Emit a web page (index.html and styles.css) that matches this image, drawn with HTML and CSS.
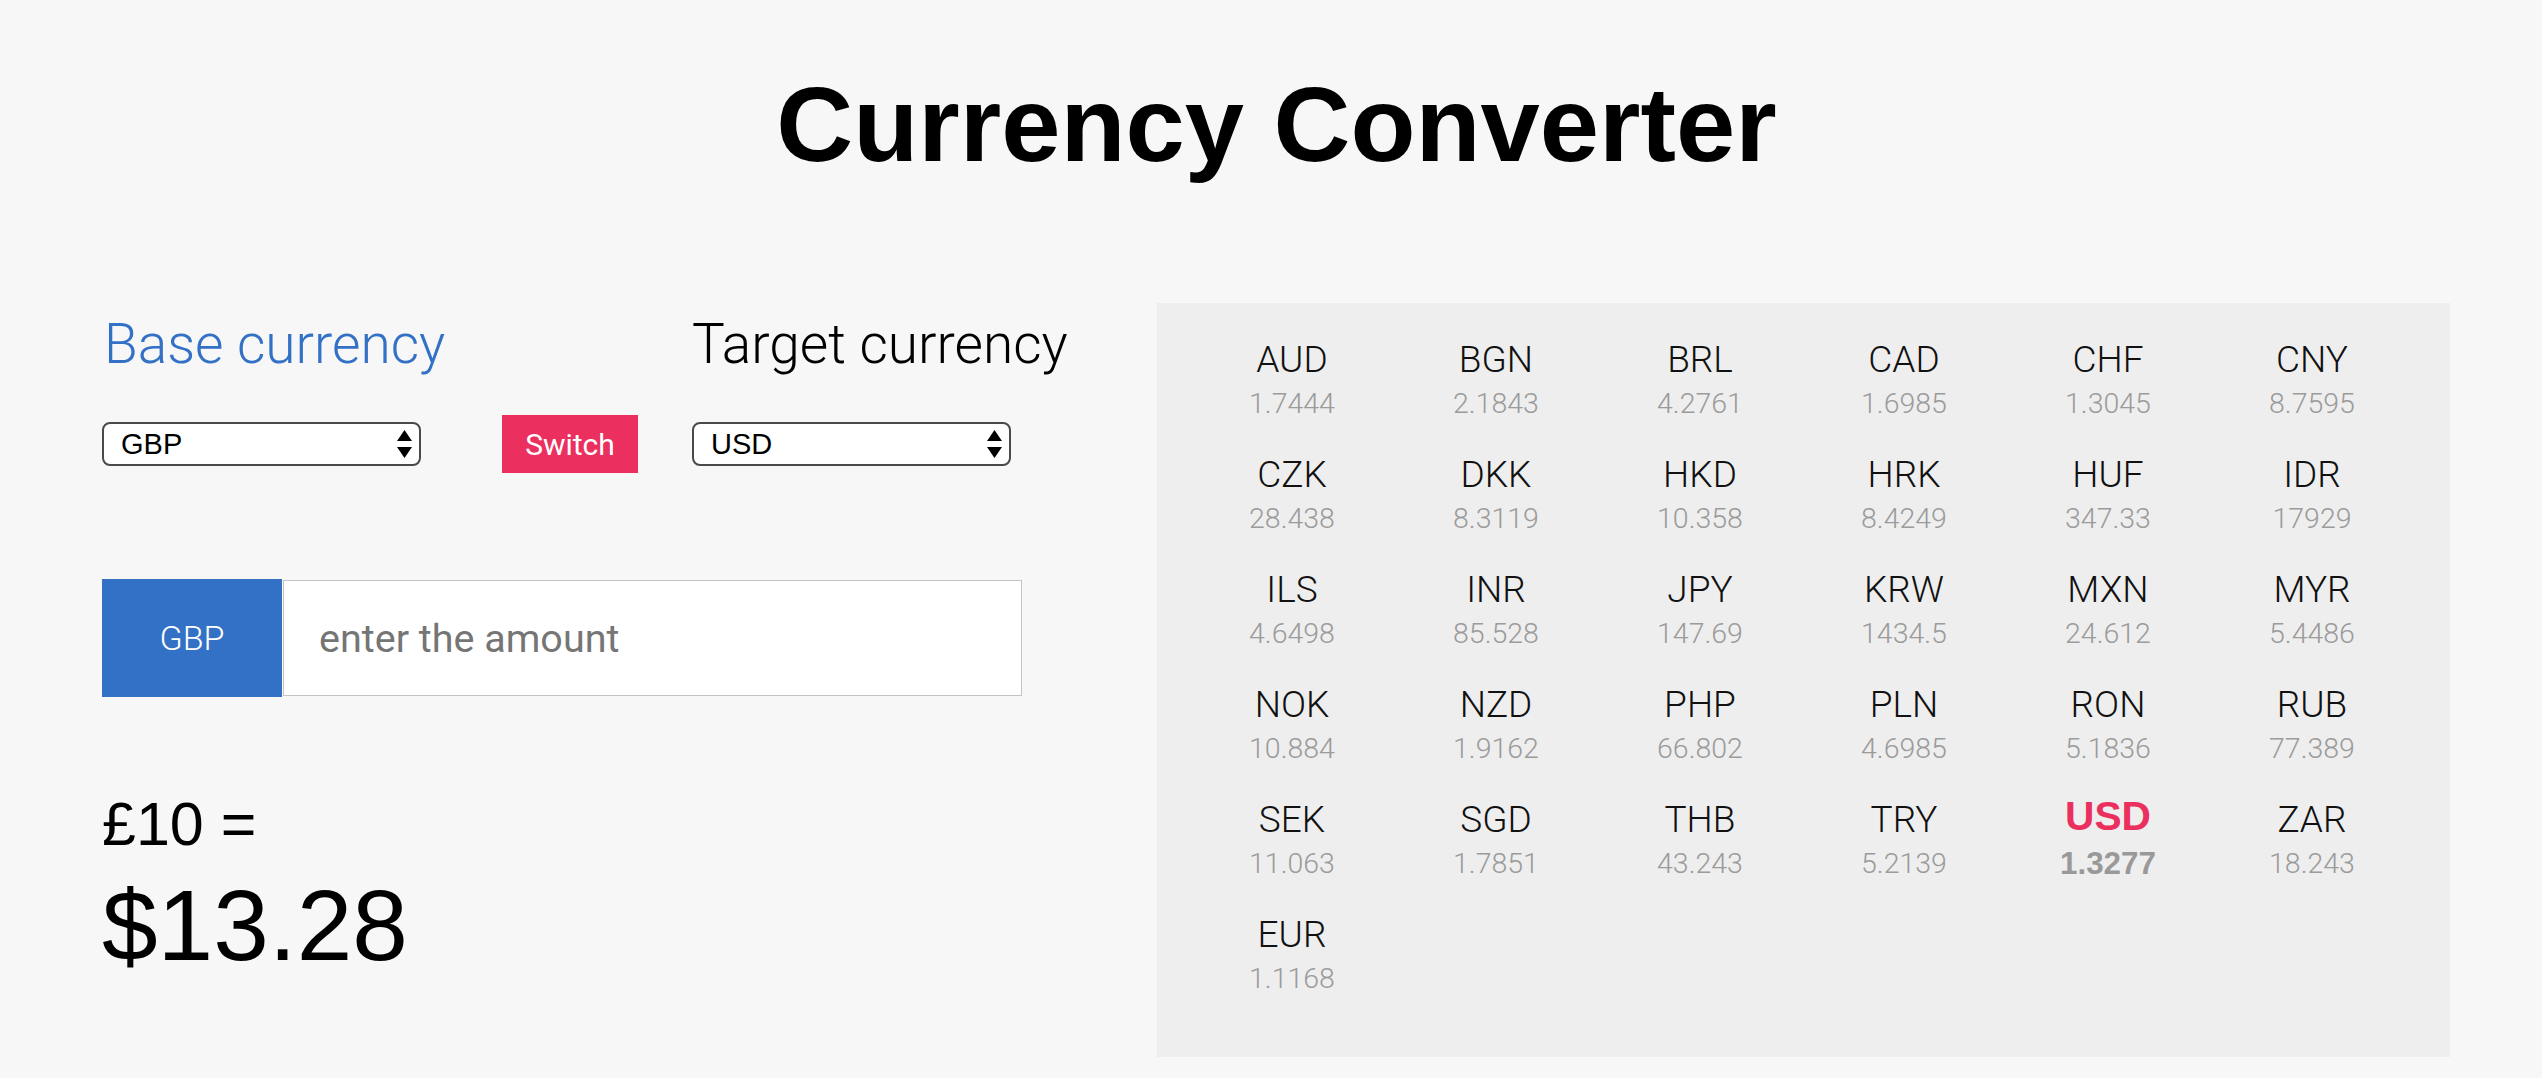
FILE: index.html
```html
<!DOCTYPE html>
<html lang="en">
<head>
<meta charset="utf-8">
<title>Currency Converter</title>
<link rel="stylesheet" href="styles.css">
</head>
<body>
<h1 class="title">Currency Converter</h1>
<main class="main">
  <section class="converter">
    <div class="selectors">
      <div class="label label-base">Base currency</div>
      <div class="spacer"></div>
      <div class="label label-target">Target currency</div>
      <div class="select">
        <span class="select-value">GBP</span>
        <svg class="select-arrows" viewBox="0 0 15 28" width="15" height="28"><polygon points="7.5,0 15,11 0,11"/><polygon points="0,17 15,17 7.5,28"/></svg>
      </div>
      <div class="switch-cell"><button class="switch">Switch</button></div>
      <div class="select">
        <span class="select-value">USD</span>
        <svg class="select-arrows" viewBox="0 0 15 28" width="15" height="28"><polygon points="7.5,0 15,11 0,11"/><polygon points="0,17 15,17 7.5,28"/></svg>
      </div>
    </div>
    <div class="amount">
      <div class="amount-code">GBP</div>
      <input class="amount-input" type="text" placeholder="enter the amount">
    </div>
    <div class="result">
      <div class="result-from">£10 =</div>
      <div class="result-to">$13.28</div>
    </div>
  </section>
  <section class="rates">
    <div class="rate"><div class="code">AUD</div><div class="value">1.7444</div></div>
    <div class="rate"><div class="code">BGN</div><div class="value">2.1843</div></div>
    <div class="rate"><div class="code">BRL</div><div class="value">4.2761</div></div>
    <div class="rate"><div class="code">CAD</div><div class="value">1.6985</div></div>
    <div class="rate"><div class="code">CHF</div><div class="value">1.3045</div></div>
    <div class="rate"><div class="code">CNY</div><div class="value">8.7595</div></div>
    <div class="rate"><div class="code">CZK</div><div class="value">28.438</div></div>
    <div class="rate"><div class="code">DKK</div><div class="value">8.3119</div></div>
    <div class="rate"><div class="code">HKD</div><div class="value">10.358</div></div>
    <div class="rate"><div class="code">HRK</div><div class="value">8.4249</div></div>
    <div class="rate"><div class="code">HUF</div><div class="value">347.33</div></div>
    <div class="rate"><div class="code">IDR</div><div class="value">17929</div></div>
    <div class="rate"><div class="code">ILS</div><div class="value">4.6498</div></div>
    <div class="rate"><div class="code">INR</div><div class="value">85.528</div></div>
    <div class="rate"><div class="code">JPY</div><div class="value">147.69</div></div>
    <div class="rate"><div class="code">KRW</div><div class="value">1434.5</div></div>
    <div class="rate"><div class="code">MXN</div><div class="value">24.612</div></div>
    <div class="rate"><div class="code">MYR</div><div class="value">5.4486</div></div>
    <div class="rate"><div class="code">NOK</div><div class="value">10.884</div></div>
    <div class="rate"><div class="code">NZD</div><div class="value">1.9162</div></div>
    <div class="rate"><div class="code">PHP</div><div class="value">66.802</div></div>
    <div class="rate"><div class="code">PLN</div><div class="value">4.6985</div></div>
    <div class="rate"><div class="code">RON</div><div class="value">5.1836</div></div>
    <div class="rate"><div class="code">RUB</div><div class="value">77.389</div></div>
    <div class="rate"><div class="code">SEK</div><div class="value">11.063</div></div>
    <div class="rate"><div class="code">SGD</div><div class="value">1.7851</div></div>
    <div class="rate"><div class="code">THB</div><div class="value">43.243</div></div>
    <div class="rate"><div class="code">TRY</div><div class="value">5.2139</div></div>
    <div class="rate rate-selected"><div class="code">USD</div><div class="value">1.3277</div></div>
    <div class="rate"><div class="code">ZAR</div><div class="value">18.243</div></div>
    <div class="rate"><div class="code">EUR</div><div class="value">1.1168</div></div>
  </section>
</main>
</body>
</html>
```
FILE: styles.css
```css
* { box-sizing: border-box; }

html, body {
  margin: 0;
  padding: 0;
}

body {
  background: #f7f7f7;
  color: #000;
  font-family: "Liberation Sans", Arial, sans-serif;
  width: 2542px;
  height: 1078px;
  overflow: hidden;
}

.title {
  margin: 72px 0 0;
  padding-left: 11px;
  font-family: "Liberation Sans", Arial, sans-serif;
  font-weight: 700;
  font-size: 106.5px;
  line-height: 106px;
  text-align: center;
}

.main {
  display: flex;
  margin-top: 125px;
  padding-left: 102px;
}

.converter {
  width: 1055px;
  padding-top: 15px;
}

.selectors {
  display: grid;
  grid-template-columns: 400px 190px 319px;
  row-gap: 44px;
  align-items: center;
}

.label {
  font-family: Roboto, "Liberation Sans", sans-serif;
  font-weight: 300;
  font-size: 55px;
  line-height: 53px;
  white-space: nowrap;
}

.label-base {
  color: #3271c5;
  padding-left: 2px;
}

.label-target {
  color: #000;
}

.select {
  display: flex;
  align-items: center;
  justify-content: space-between;
  width: 319px;
  height: 44px;
  background: #fff;
  border: 2px solid #4a4a4a;
  border-radius: 8px;
  padding: 0 7px 0 17px;
}

.select-value {
  font-family: "Liberation Sans", Arial, sans-serif;
  font-size: 29px;
  line-height: 1;
  color: #000;
}

.select-arrows {
  display: block;
  fill: #000;
}

.switch-cell {
  display: flex;
  align-items: center;
}

.switch {
  width: 136px;
  height: 58px;
  border: 0;
  margin: 0;
  padding: 0;
  background: #eb2f5e;
  color: #fff;
  font-family: Roboto, "Liberation Sans", sans-serif;
  font-weight: 400;
  font-size: 30px;
}

.amount {
  display: flex;
  margin-top: 106px;
  height: 118px;
}

.amount-code {
  width: 180px;
  height: 118px;
  background: #3271c5;
  color: #fff;
  font-family: Roboto, "Liberation Sans", sans-serif;
  font-weight: 300;
  font-size: 34px;
  display: flex;
  align-items: center;
  justify-content: center;
}

.amount-input {
  width: 739px;
  height: 116px;
  margin: 1px 0 0 1px;
  border: 1px solid #c4c4c4;
  background: #fff;
  padding: 0 0 0 35px;
  font-family: Roboto, "Liberation Sans", sans-serif;
  font-size: 39.5px;
  outline: none;
}

.amount-input::placeholder {
  color: #757575;
}

.result {
  margin-top: 97px;
}

.result-from {
  font-family: "Liberation Sans", Arial, sans-serif;
  font-size: 61px;
  line-height: 60px;
}

.result-to {
  margin-top: 21px;
  font-family: "Liberation Sans", Arial, sans-serif;
  font-size: 100px;
  line-height: 100px;
}

.rates {
  width: 1293px;
  height: 754px;
  background: #eeeeee;
  display: grid;
  grid-template-columns: repeat(6, 204px);
  grid-auto-rows: 86px;
  row-gap: 29px;
  align-content: start;
  padding: 35px 34px 0 33px;
}

.rate {
  text-align: center;
  font-family: Roboto, "Liberation Sans", sans-serif;
  font-weight: 300;
}

.code {
  font-size: 37px;
  line-height: 44px;
  color: #111;
}

.value {
  font-size: 28.5px;
  line-height: 44px;
  color: #9b9b9b;
}

.rate-selected .code {
  font-size: 40.7px;
  line-height: 37px;
  font-weight: 700;
  color: #eb2f5e;
  font-family: "Liberation Sans", Arial, sans-serif;
}

.rate-selected .value {
  font-size: 31.4px;
  margin-top: 7px;
  font-weight: 700;
  color: #999;
  font-family: "Liberation Sans", Arial, sans-serif;
}
```
